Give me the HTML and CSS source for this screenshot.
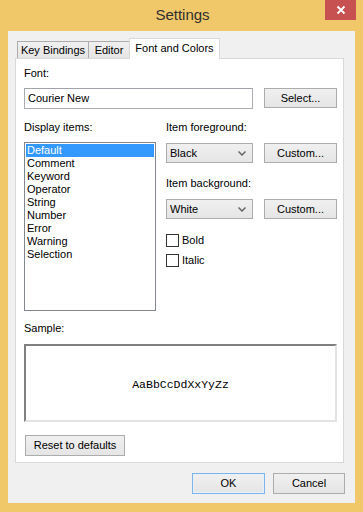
FILE: index.html
```html
<!DOCTYPE html>
<html lang="en">
<head>
    <meta charset="UTF-8">
    <meta name="viewport" content="width=device-width, initial-scale=1.0">
    <title>Settings</title>
    <link rel="stylesheet" href="styles.css">
</head>
<body>
    <div class="window">
        <div class="titlebar">
            <span class="title">Settings</span>
            <div class="close">
                <svg width="10" height="10" viewBox="0 0 10 10"><path d="M1.5 1.5 L8.5 8.5 M8.5 1.5 L1.5 8.5" stroke="#fff" stroke-width="1.8" fill="none"/></svg>
            </div>
        </div>
        <div class="client">
            <div class="tabs">
                <div class="tab keys">Key Bindings</div>
                <div class="tab editor">Editor</div>
                <div class="tab active">Font and Colors</div>
            </div>
            <div class="panel">
                <div class="label">Font:</div>
                <div class="row">
                    <div class="textbox">Courier New</div>
                    <div class="button">Select...</div>
                </div>

                <div class="columns">
                    <div class="col-left">
                        <div class="label">Display items:</div>
                        <div class="listbox">
                            <div class="item selected">Default</div>
                            <div class="item">Comment</div>
                            <div class="item">Keyword</div>
                            <div class="item">Operator</div>
                            <div class="item">String</div>
                            <div class="item">Number</div>
                            <div class="item">Error</div>
                            <div class="item">Warning</div>
                            <div class="item">Selection</div>
                        </div>
                    </div>
                    <div class="col-right">
                        <div class="label">Item foreground:</div>
                        <div class="row small">
                            <div class="combo">Black
                                <svg class="chevron" width="8" height="5" viewBox="0 0 8 5"><path d="M0.5 0.5 L4 4 L7.5 0.5" stroke="#666" stroke-width="1.5" fill="none"/></svg>
                            </div>
                            <div class="button">Custom...</div>
                        </div>
                        <div class="label second">Item background:</div>
                        <div class="row small">
                            <div class="combo">White
                                <svg class="chevron" width="8" height="5" viewBox="0 0 8 5"><path d="M0.5 0.5 L4 4 L7.5 0.5" stroke="#666" stroke-width="1.5" fill="none"/></svg>
                            </div>
                            <div class="button">Custom...</div>
                        </div>
                        <div class="check first"><span class="box"></span>Bold</div>
                        <div class="check"><span class="box"></span>Italic</div>
                    </div>
                </div>

                <div class="label sample-label">Sample:</div>
                <div class="sample">AaBbCcDdXxYyZz</div>

                <div class="button reset">Reset to defaults</div>
            </div>

            <div class="footer">
                <div class="button ok">OK</div>
                <div class="button cancel">Cancel</div>
            </div>
        </div>
    </div>
</body>
</html>
```

FILE: styles.css
```css
body {
    margin: 0;
    padding: 0;
    font-family: "Liberation Sans", Arial, sans-serif;
    font-size: 11px;
    color: #000;
}

.window {
    width: 363px;
    height: 512px;
    background: #f0c86a;
    box-sizing: border-box;
    padding: 0 8px 9px 8px;
    display: flex;
    flex-direction: column;
}

/* Title bar */
.titlebar {
    height: 31px;
    position: relative;
    display: flex;
    justify-content: center;
}

.title {
    font-size: 15px;
    line-height: 30px;
    color: #2f2f2f;
    margin-left: 2px;
}

.close {
    position: absolute;
    top: 0;
    right: -1px;
    width: 31px;
    height: 20px;
    background: #c75050;
    display: flex;
    align-items: center;
    justify-content: center;
}

.client {
    flex: 1;
    background: #f0f0f0;
    padding: 7px 11px 0 7px;
}

/* Tabs */
.tabs {
    display: flex;
    align-items: flex-end;
    height: 20px;
    padding-left: 2px;
    position: relative;
    z-index: 1;
}

.tab {
    height: 17px;
    line-height: 16px;
    text-align: center;
    border: 1px solid #acacac;
    border-bottom: none;
    background: linear-gradient(#f0f0f0, #e5e5e5);
    margin-right: -1px;
    box-sizing: border-box;
}

.tab.keys {
    width: 72px;
}

.tab.editor {
    width: 42px;
}

.tab.active {
    width: 91px;
    height: 21px;
    line-height: 18px;
    background: #fff;
    margin-bottom: -1px;
    border-color: #d9d9d9;
}

.panel {
    background: #fff;
    border: 1px solid #d9d9d9;
    padding: 7px 6px 6px 8px;
}

.label {
    line-height: 15px;
    height: 15px;
}

.row {
    display: flex;
    margin-top: 7px;
}

.row.small {
    margin-top: 8px;
}

.textbox {
    width: 229px;
    height: 21px;
    box-sizing: border-box;
    border: 1px solid #abadb3;
    border-top-color: #a0a3aa;
    line-height: 19px;
    padding-left: 3px;
}

.button {
    width: 73px;
    height: 20px;
    box-sizing: border-box;
    border: 1px solid #acacac;
    background: linear-gradient(#f0f0f0, #e5e5e5);
    text-align: center;
    line-height: 18px;
    margin-left: 11px;
}

/* Two columns */
.columns {
    display: flex;
    margin-top: 11px;
}

.col-left {
    width: 132px;
}

.listbox {
    margin-top: 7px;
    height: 169px;
    box-sizing: border-box;
    border: 1px solid #828790;
    padding: 1px;
}

.item {
    height: 13px;
    line-height: 13px;
    padding-left: 1px;
}

.item.selected {
    background: #3399ff;
    color: #fff;
}

.col-right {
    margin-left: 10px;
}

.label.second {
    margin-top: 13px;
}

.combo {
    width: 87px;
    height: 20px;
    box-sizing: border-box;
    border: 1px solid #acacac;
    background: linear-gradient(#f0f0f0, #e5e5e5);
    line-height: 18px;
    padding-left: 3px;
    display: flex;
    justify-content: space-between;
    align-items: center;
}

.chevron {
    margin-right: 6px;
}

.check {
    display: flex;
    align-items: center;
    height: 14px;
    margin-top: 6px;
}

.check.first {
    margin-top: 14px;
}

.box {
    width: 13px;
    height: 13px;
    box-sizing: border-box;
    border: 1px solid #333;
    background: #fff;
    margin-right: 3px;
}

/* Sample */
.sample-label {
    margin-top: 10px;
}

.sample {
    margin-top: 8px;
    height: 78px;
    box-sizing: border-box;
    border: 2px solid;
    border-color: #808080 #e3e3e3 #e3e3e3 #808080;
    display: flex;
    align-items: center;
    justify-content: center;
    font-family: "Liberation Mono", monospace;
    font-size: 11.5px;
    padding-top: 3px;
}

.button.reset {
    margin: 13px 0 0 1px;
    width: 100px;
    height: 21px;
    line-height: 19px;
}

/* Dialog buttons */
.footer {
    display: flex;
    justify-content: flex-end;
    margin-top: 10px;
    margin-right: -1px;
}

.footer .button {
    height: 21px;
    line-height: 19px;
    margin-left: 8px;
}

.button.ok {
    border-color: #7eb4ea;
    box-shadow: inset 0 0 0 1px #e5f1fb;
}

.button.cancel {
    width: 72px;
}
```
